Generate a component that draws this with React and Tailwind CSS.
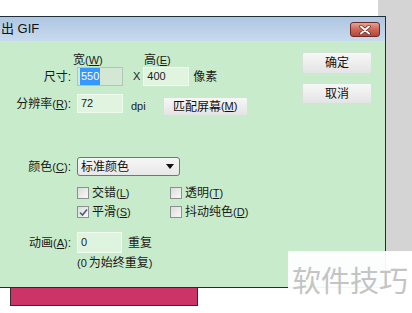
import React from "react";

const font = { fontFamily: '"Liberation Sans", "Noto Sans CJK SC", sans-serif' };

const Key = ({ k }) => (
  <span className="text-[11px]">
    (<span className="underline">{k}</span>)
  </span>
);

const Label = ({ children }) => (
  <div className="w-[71px] shrink-0 text-right text-[12px] leading-none text-[#1a1a1a]">
    {children}
  </div>
);

const Input = ({ value, selected }) => (
  <div
    className={
      "flex h-[19px] w-[46px] items-center border px-[2px] text-[11px] " +
      (selected
        ? "border-[#b4c6b8] bg-[#d3e8d4]"
        : "border-[#eefaee] bg-[#e0f4e0]")
    }
  >
    <span className={selected ? "bg-[#3399ff] px-[1px] text-white" : "px-[1px] text-[#222]"}>
      {value}
    </span>
  </div>
);

const Button = ({ children, className }) => (
  <div
    className={
      "flex items-center justify-center rounded-[2px] border border-[#d6e2d6] bg-gradient-to-b from-[#f7f7f7] to-[#e4e4e4] text-[12px] text-[#111] " +
      className
    }
  >
    {children}
  </div>
);

const Check = ({ checked, children }) => (
  <div className="flex items-center gap-[3px] text-[12px] text-[#1a1a1a]">
    <div className="flex h-[12px] w-[12px] items-center justify-center border border-[#8e8f8f] bg-gradient-to-br from-[#dcdcdc] to-[#f8f8f8]">
      {checked && (
        <svg width="9" height="9" viewBox="0 0 9 9">
          <path d="M1 4.5 L3.5 7 L8 1.5" fill="none" stroke="#4a5f78" strokeWidth="1.6" />
        </svg>
      )}
    </div>
    <span>{children}</span>
  </div>
);

export default function App() {
  return (
    <div className="relative h-[313px] w-[412px] overflow-hidden bg-white" style={font}>
      {/* gray backdrop on the right */}
      <div className="absolute right-0 top-0 h-[252px] w-[34px] bg-[#d4d4d4]" />

      {/* dialog window */}
      <div className="absolute left-0 top-[16px] flex h-[272px] w-[386px] flex-col border-y border-r border-[#1f2f38]">
        <div className="relative flex h-[24px] shrink-0 items-center bg-gradient-to-b from-[#afc6e1] to-[#c7daee] pl-[1px] text-[13px] text-[#111]">
          出 GIF
          <div className="absolute right-[5px] top-[5px] flex h-[15px] w-[30px] items-center justify-center rounded-[3px] border border-[#6e2a24] bg-gradient-to-b from-[#e4a393] via-[#cf6655] to-[#b8463a]">
            <svg width="12" height="10" viewBox="0 0 12 10">
              <path d="M2 1.5 L10 8.5 M10 1.5 L2 8.5" stroke="#5b2a24" strokeWidth="3.4" strokeLinecap="round" />
              <path d="M2 1.5 L10 8.5 M10 1.5 L2 8.5" stroke="#ffffff" strokeWidth="2" strokeLinecap="round" />
            </svg>
          </div>
        </div>

        <div className="flex flex-1 bg-[#c8ebcb]">
          {/* form */}
          <div className="flex w-[300px] flex-col">
            <div className="mt-[12px] flex h-[14px] items-center text-[12px] leading-none text-[#1a1a1a]">
              <span className="ml-[73px] w-[71px]">
                宽<Key k="W" />
              </span>
              <span>
                高<Key k="E" />
              </span>
            </div>

            <div className="flex h-[19px] items-center">
              <Label>尺寸:</Label>
              <div className="ml-[6px]">
                <Input value="550" selected />
              </div>
              <span className="ml-[10px] text-[11px] text-[#222]">X</span>
              <div className="ml-[3px]">
                <Input value="400" />
              </div>
              <span className="ml-[4px] text-[12px] text-[#1a1a1a]">像素</span>
            </div>

            <div className="mt-[8px] flex h-[22px] items-start">
              <div className="flex h-[19px] items-center">
                <Label>
                  分辨率<Key k="R" />:
                </Label>
              </div>
              <div className="ml-[6px]">
                <Input value="72" />
              </div>
              <span className="ml-[8px] mt-[4px] text-[11px] text-[#222]">dpi</span>
              <Button className="ml-[17px] mt-[3px] h-[19px] w-[85px]">
                匹配屏幕<Key k="M" />
              </Button>
            </div>

            <div className="mt-[41px] flex h-[19px] items-center">
              <Label>
                颜色<Key k="C" />:
              </Label>
              <div className="ml-[6px] flex h-[19px] w-[103px] items-center justify-between rounded-[3px] border border-[#747474] bg-gradient-to-b from-[#f6f6f6] to-[#e8e8e8] pl-[3px] pr-[5px] text-[12px] text-[#111]">
                <span>标准颜色</span>
                <svg width="8" height="5" viewBox="0 0 8 5">
                  <path d="M0 0 L8 0 L4 5 Z" fill="#111" />
                </svg>
              </div>
            </div>

            <div className="mt-[10px] flex h-[14px] items-center pl-[77px]">
              <div className="w-[93px]">
                <Check>
                  交错<Key k="L" />
                </Check>
              </div>
              <Check>
                透明<Key k="T" />
              </Check>
            </div>

            <div className="mt-[5px] flex h-[14px] items-center pl-[77px]">
              <div className="w-[93px]">
                <Check checked>
                  平滑<Key k="S" />
                </Check>
              </div>
              <Check>
                抖动纯色<Key k="D" />
              </Check>
            </div>

            <div className="mt-[13px] flex h-[21px] items-center">
              <Label>
                动画<Key k="A" />:
              </Label>
              <div className="ml-[6px] flex h-[21px] w-[45px] items-center border border-[#f2fcf2] bg-[#dff4df] px-[3px] text-[11px] text-[#222]">
                0
              </div>
              <span className="ml-[6px] text-[12px] text-[#1a1a1a]">重复</span>
            </div>

            <div className="mt-[4px] flex h-[12px] items-center pl-[77px] text-[12px] leading-none text-[#1a1a1a]">
              <span className="text-[11px]">(0 </span>
              <span className="ml-[2px]">为始终重复</span>
              <span className="text-[11px]">)</span>
            </div>
          </div>

          {/* buttons */}
          <div className="ml-[2px] flex flex-col pt-[11px]">
            <Button className="h-[22px] w-[70px]">确定</Button>
            <Button className="mt-[9px] h-[21px] w-[70px]">取消</Button>
          </div>
        </div>
      </div>

      {/* pink bar below the dialog */}
      <div className="absolute left-[10px] top-[288px] h-[18px] w-[188px] border-x border-b border-[#3a2a2e] bg-[#cc3366]" />

      {/* watermark */}
      <div className="absolute left-[288px] top-[251px] flex h-[62px] w-[124px] items-center justify-center bg-white/95 text-[29px] leading-none text-[#c4c4c4]">
        软件技巧
      </div>
    </div>
  );
}
